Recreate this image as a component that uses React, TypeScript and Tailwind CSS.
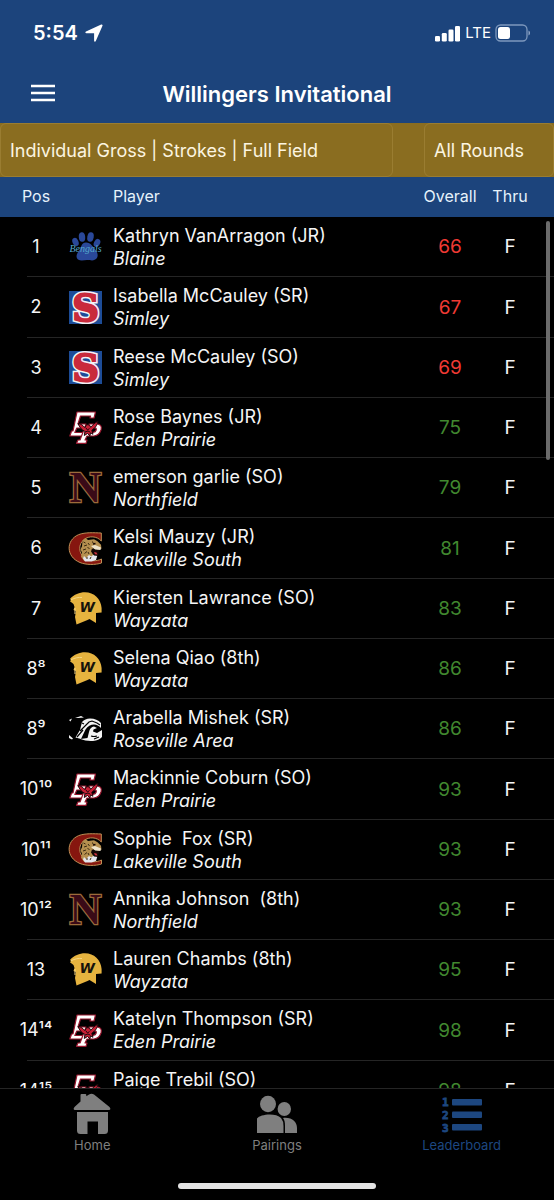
import React from "react";

type School =
  | "Blaine"
  | "Simley"
  | "Eden Prairie"
  | "Northfield"
  | "Lakeville South"
  | "Wayzata"
  | "Roseville Area";

type Entry = { pos: string; name: string; school: School; score: number };

const PAR = 72;

const entries: Entry[] = [
  { pos: "1", name: "Kathryn VanArragon (JR)", school: "Blaine", score: 66 },
  { pos: "2", name: "Isabella McCauley (SR)", school: "Simley", score: 67 },
  { pos: "3", name: "Reese McCauley (SO)", school: "Simley", score: 69 },
  { pos: "4", name: "Rose Baynes (JR)", school: "Eden Prairie", score: 75 },
  { pos: "5", name: "emerson garlie (SO)", school: "Northfield", score: 79 },
  { pos: "6", name: "Kelsi Mauzy (JR)", school: "Lakeville South", score: 81 },
  { pos: "7", name: "Kiersten Lawrance (SO)", school: "Wayzata", score: 83 },
  { pos: "8⁸", name: "Selena Qiao (8th)", school: "Wayzata", score: 86 },
  { pos: "8⁹", name: "Arabella Mishek (SR)", school: "Roseville Area", score: 86 },
  { pos: "10¹⁰", name: "Mackinnie Coburn (SO)", school: "Eden Prairie", score: 93 },
  { pos: "10¹¹", name: "Sophie  Fox (SR)", school: "Lakeville South", score: 93 },
  { pos: "10¹²", name: "Annika Johnson  (8th)", school: "Northfield", score: 93 },
  { pos: "13", name: "Lauren Chambs (8th)", school: "Wayzata", score: 95 },
  { pos: "14¹⁴", name: "Katelyn Thompson (SR)", school: "Eden Prairie", score: 98 },
  { pos: "14¹⁵", name: "Paige Trebil (SO)", school: "Eden Prairie", score: 98 },
];

function BlaineLogo() {
  return (
    <>
      <g fill="#2a489a">
        <ellipse cx="6.5" cy="12" rx="3" ry="4.3" transform="rotate(-22 6.5 12)" />
        <ellipse cx="13" cy="7" rx="3.200" ry="4.8" transform="rotate(-5 13 7)" />
        <ellipse cx="21.500" cy="7" rx="3.200" ry="4.8" transform="rotate(10 21.5 7)" />
        <ellipse cx="28" cy="13" rx="3" ry="4.3" transform="rotate(26 28 13)" />
        <path d="M17 12.500c5 0 7 4.500 9.500 7.500 3 3.500 3 8-.8 9.800-2.500 1.200-4.500.2-7.700.2s-6 1.200-9-.6c-3-2.700-.8-6.500 1.500-9.500C12.500 17 12.500 12.500 17 12.500z" />
      </g>
      <text x="0.500" y="21.500" fontSize="10" fontStyle="italic" fontFamily="Liberation Serif, serif" fill="#55a9cc">
        Bengals
      </text>
    </>
  );
}

function SimleyLogo() {
  return (
    <>
      <rect width="33" height="33" fill="#1d4c97" />
      <text
        x="16.500"
        y="30"
        textAnchor="middle"
        fontSize="37"
        fontWeight="700"
        fontFamily="DejaVu Serif, serif"
        fill="#c92a3c"
        stroke="#f4f1f5"
        strokeWidth="5"
        strokeLinejoin="miter"
        paintOrder="stroke"
      >
        S
      </text>
      <text
        x="16.500"
        y="30"
        textAnchor="middle"
        fontSize="37"
        fontWeight="700"
        fontFamily="DejaVu Serif, serif"
        fill="#c92a3c"
        stroke="#c92a3c"
        strokeWidth="2"
        aria-hidden="true"
      >
        S
      </text>
    </>
  );
}

function EdenPrairieLogo() {
  return (
    <>
      <g fill="#fff" stroke="#96162d" strokeWidth="1.200" strokeLinejoin="round">
        <path d="M8 1h18.500l-1.500 6h-4l.6-2H11.500L9 13h8l-1.300 4H7.800l-2 4.500H15l-1 3.500H.8l1.800-5H4z" />
        <path d="M20 13h8.500q5 1 3.500 6-1.800 5.500-7 6h-7l-2 4h2l-1 3.300H7.500L9 29h2l5-13 5 0-3 5.500h6q2.700-.5 3.200-2.500t-1.500-2.200H20z" />
      </g>
      <path
        d="M9 12.500c3 .2 5 2 7 4.200l1.600-3.200 3 .6 1.100 2.200c2-2.600 4.300-4.600 7.300-6-.7 3.200-2 5.600-4 7.200l-2.200 1.800 1.200 4-2.500-1.500-.6 3.200-2.300-2.600-3.300 2.100.6-4.100c-3.300-1.600-5.400-4.200-6.900-7.900z"
        fill="#c81f35"
        stroke="#21080d"
        strokeWidth="1"
      />
      <path d="M17 17l1.500 2 2-1.500M16 21l3-1 2 1" fill="none" stroke="#21080d" strokeWidth="1" />
    </>
  );
}

function NorthfieldLogo() {
  return (
    <text
      x="16.500"
      y="31"
      textAnchor="middle"
      fontSize="44"
      fontWeight="700"
      fontFamily="Liberation Serif, serif"
      fill="#3a0a17"
      stroke="#9c6b3a"
      strokeWidth="2.500"
      paintOrder="stroke"
    >
      N
    </text>
  );
}

function LakevilleLogo() {
  return (
    <>
      <path
        d="M32.300 1v8C28 4 20 3.500 15 7.500c-6 4.500-5.500 14 .5 18.500 5 3.500 12 3.500 17 1V31c-6 2-15.500 2-21.500-.5C-3.500 24.500-3 8 9.500 2.700 16.500 0 25 .8 32.300 1z"
        fill="#86160f"
        stroke="#bd9055"
        strokeWidth="1"
      />
      <path d="M13.500 8.500l3-2.500 2.500 2 6-.8 3.500 2 3.500 3.500.5 4-4 .5-4.500-1-1 4 2.500 4.500-4 4H15l-3-4 1-4-1.500-3.500 1.500-3z" fill="#b58f4f" />
      <path d="M15 24l2 2 3-3 2.500 1.500L25 22l3.500 1-1.500 5-4.500 1.500H16l-2-3z" fill="#e4e6ee" />
      <path d="M22 14l4-1 6 2.500-.5 2.500-5.500-.5z" fill="#eee3cb" />
      <path d="M23 16.500l3 1.500h4.500l-1 3-.5 3-4-.5-3-4z" fill="#140706" />
      <path d="M25 20l2.500.5 1 2-2.500-.3z" fill="#cb3140" />
      <path
        d="M14.500 10l2 1M15 14l3-1M14 18l3-1M15.500 21.500l2.500-2M19 11l1.500 2M23.500 9.500l.5 1.500M18.500 15.500l2 1M19 20l1 2M18 25v2M22 25l-1 2"
        stroke="#3a2912"
        strokeWidth="1"
      />
      <path d="M24 12l2.500-.5" stroke="#140706" strokeWidth="1.400" />
    </>
  );
}

function WayzataLogo() {
  return (
    <>
      <path
        d="M1 7C5 2.500 10.500.3 16 .3c9 0 16 6.700 16.600 15.700v4.500L27 21v10l-6.500-4-2 1-11 4.500L6 25l1-6-2.500-1 1-3-1-3L1 9.300l1-1.300z"
        fill="#e6b33f"
      />
      <path d="M2 7.800c4-2 7.500-2.700 11-2.300M6 16v6" fill="none" stroke="#f6d684" strokeWidth="1" />
      <text x="10.500" y="20" fontSize="14" fontStyle="italic" fontWeight="700" fontFamily="DejaVu Sans, sans-serif" fill="#17130b">
        W
      </text>
    </>
  );
}

function RosevilleLogo() {
  return (
    <>
      <g fill="#f3f3f3">
        <path d="M0 8l3-1.500-1.500 3zM6 6l6-2 3 1.500-6 .6zM0 23l4 3.500-1 1L0 26z" />
        <path d="M13 10q3-3.500 8-3.500 7 0 11 4.500v5q-3-3.500-7-3.500-5 0-8.500 5L12 27l-5.500-1.500L11 18z" />
        <path d="M20 20q1-5 5-5.500l3 1.500-3.500 1.500-.5 2 4 1.500 5-3V25q-3 3.500-9 4-7 .5-12.500-2l7-1z" />
      </g>
      <path d="M11 19l9-9 3-1M8 25l6-7M15 12l-2-1M23 9l5 2 3 2M15 25l4-6M22 24q3 1 6 0M25 27l5-2" fill="none" stroke="#000" strokeWidth="1.200" />
    </>
  );
}

const logos: Record<School, () => React.JSX.Element> = {
  Blaine: BlaineLogo,
  Simley: SimleyLogo,
  "Eden Prairie": EdenPrairieLogo,
  Northfield: NorthfieldLogo,
  "Lakeville South": LakevilleLogo,
  Wayzata: WayzataLogo,
  "Roseville Area": RosevilleLogo,
};

function SchoolLogo({ school }: { school: School }) {
  const Art = logos[school];
  return (
    <svg viewBox="0 0 33 33" className="size-[33px] shrink-0 overflow-visible" aria-hidden="true">
      <Art />
    </svg>
  );
}

function StatusBar() {
  return (
    <div className="flex h-[66px] items-center justify-between pr-[23px] pl-[33px]">
      <div className="flex items-center gap-[7px]">
        <span className="text-[20px] font-semibold">5:54</span>
        <svg viewBox="0 0 18 18" className="size-[18px]" fill="#fff" aria-hidden="true">
          <path d="M16.200.5a1 1 0 0 1 1.300 1.300L10.800 17c-.4 1-1.700.8-1.700-.3V9.200H1.400C.2 9.200 0 7.900 1 7.400z" />
        </svg>
      </div>
      <div className="flex items-center gap-1">
        <svg viewBox="0 0 26 17" className="h-[17px] w-[26px]" fill="#fff" aria-hidden="true">
          <rect x="0" y="11" width="5" height="5.500" rx="1.300" />
          <rect x="6.800" y="8" width="5" height="8.500" rx="1.300" />
          <rect x="13.500" y="4.500" width="5" height="12" rx="1.300" />
          <rect x="20" y="1" width="5" height="15.500" rx="1.300" />
        </svg>
        <span className="text-[15px]">LTE</span>
        <svg viewBox="0 0 36 18" className="h-[18px] w-9" aria-hidden="true">
          <rect x="1" y="1" width="31" height="16" rx="4.500" fill="none" stroke="#7d98bd" strokeWidth="1.300" />
          <rect x="3" y="3" width="12" height="12" rx="2.500" fill="#fff" />
          <path d="M33.500 6.500c2 .8 2 4.200 0 5z" fill="#8fa6c6" />
        </svg>
      </div>
    </div>
  );
}

function NavBar() {
  return (
    <div className="grid h-[57px] grid-cols-[86px_1fr_86px] items-center">
      <button type="button" aria-label="Menu" className="flex justify-center pb-1">
        <svg viewBox="0 0 24 18" className="h-[18px] w-6" stroke="#fff" strokeWidth="2.400" aria-hidden="true">
          <path d="M0 2h24M0 9h24M0 16h24" />
        </svg>
      </button>
      <h1 className="text-center text-[22px] font-semibold">Willingers Invitational</h1>
    </div>
  );
}

function Filters() {
  const box =
    "h-full appearance-none rounded-md border border-[#9a7d31] bg-transparent px-[9px] text-[18px] text-[#fcf5e0] outline-none";
  return (
    <div className="flex h-[54px] justify-between gap-[31px] bg-[#8a6d20]">
      <select aria-label="Leaderboard" className={`${box} min-w-0 flex-1`}>
        <option>Individual Gross | Strokes | Full Field</option>
      </select>
      <select aria-label="Round" className={`${box} w-[130px]`}>
        <option>All Rounds</option>
      </select>
    </div>
  );
}

function Leaderboard() {
  return (
    <table className="w-full table-fixed border-separate border-spacing-0">
      <colgroup>
        <col className="w-[69px]" />
        <col />
        <col className="w-[60px]" />
        <col className="w-[74px]" />
      </colgroup>
      <thead className="sticky top-0 z-10 bg-[#1c447c] text-[16px] text-[#e6f2fb]">
        <tr className="h-10">
          <th className="pb-[2px] pl-[3px] text-center font-normal">Pos</th>
          <th className="pb-[2px] pl-[44px] text-left font-normal">Player</th>
          <th className="pb-[2px] text-center font-normal">Overall</th>
          <th className="pr-[14px] pb-[2px] text-center font-normal">Thru</th>
        </tr>
      </thead>
      <tbody>
        {entries.map((e) => (
          <tr key={e.name} className="h-[60px] nth-[4n+2]:h-[61px]">
            <td className="relative pb-[2px] pl-[3px] text-center text-[18px] after:absolute after:right-0 after:bottom-0 after:left-[27px] after:h-px after:bg-[#252525]">
              {e.pos}
            </td>
            <td className="border-b border-[#252525]">
              <div className="flex items-center gap-[11px]">
                <SchoolLogo school={e.school} />
                <div className="min-w-0 text-[18px] leading-[23px] whitespace-pre">
                  <div>{e.name}</div>
                  <div className="italic">{e.school}</div>
                </div>
              </div>
            </td>
            <td
              className={`border-b border-[#252525] pt-[2px] text-center text-[19px] ${
                e.score < PAR ? "text-[#f03a34]" : "text-[#41882f]"
              }`}
            >
              {e.score}
            </td>
            <td className="border-b border-[#252525] pt-[2px] pr-[14px] text-center text-[19px]">F</td>
          </tr>
        ))}
      </tbody>
    </table>
  );
}

function HomeIcon() {
  return (
    <svg viewBox="0 0 40 42" className="h-[42px] w-10" fill="#7f7f7f" aria-hidden="true">
      <path d="M8.500 8.500V2q0-1 1-1h3.800q1 0 1 1v1.300L17 1.500q2.500-1.500 5 0L37.500 14q2 2.500-.5 3H3q-2.500-.5-.5-3z" />
      <path d="M5 19h31v18.500q0 3.500-3.500 3.500H26V28.500H15.500V41H8.500Q5 41 5 37.500z" />
    </svg>
  );
}

function PairingsIcon() {
  return (
    <svg viewBox="0 0 42 42" className="size-[42px]" fill="#7f7f7f" aria-hidden="true">
      <ellipse cx="12" cy="11" rx="8" ry="8.300" />
      <ellipse cx="28.300" cy="16" rx="6.700" ry="7" />
      <path d="M1 40V25.500C4 21 20 19.500 25 25q2.500 3 2.500 8v7z" />
      <path d="M27 25c9-1 14 4 14 10v5H29v-7c0-4-.5-6-2-8z" />
    </svg>
  );
}

function LeaderboardIcon() {
  return (
    <svg viewBox="0 0 42 42" className="size-[42px]" fill="#1d4780" aria-hidden="true">
      <g fontSize="11" fontWeight="700" fontFamily="DejaVu Sans Mono, monospace" stroke="#1d4780" strokeWidth="0.800">
        <text x="1" y="13">1</text>
        <text x="1" y="26">2</text>
        <text x="1" y="39">3</text>
      </g>
      <rect x="11" y="6" width="30" height="6.500" rx="1" />
      <rect x="11" y="18.500" width="30" height="6.500" rx="1" />
      <rect x="11" y="31" width="30" height="6.500" rx="1" />
    </svg>
  );
}

function TabBar() {
  const tab = "flex flex-col items-center text-[13px] leading-5";
  return (
    <footer className="border-t border-[#252525] bg-black">
      <nav className="grid grid-cols-3 pt-1 pb-7">
        <a href="#home" className={`${tab} text-[#7f7f7f]`}>
          <HomeIcon />
          Home
        </a>
        <a href="#pairings" className={`${tab} text-[#7f7f7f]`}>
          <PairingsIcon />
          Pairings
        </a>
        <a href="#leaderboard" aria-current="page" className={`${tab} text-[#1d4780]`}>
          <LeaderboardIcon />
          Leaderboard
        </a>
      </nav>
      <div className="mx-auto mb-[11px] h-[6px] w-[198px] rounded-full bg-[#e4e4e4]" />
    </footer>
  );
}

export default function App() {
  return (
    <div className="flex h-screen flex-col bg-black font-['Inter',sans-serif] text-[#f5f5f5]">
      <header className="shrink-0 bg-[#1c447c] text-white">
        <StatusBar />
        <NavBar />
        <Filters />
      </header>
      <main className="relative min-h-0 flex-1">
        <div className="h-full overflow-y-auto [scrollbar-width:none]">
          <Leaderboard />
        </div>
        <div className="absolute top-[44px] right-[4px] h-[239px] w-1 rounded-full bg-[#6b6b6b]" />
      </main>
      <div className="shrink-0">
        <TabBar />
      </div>
    </div>
  );
}
